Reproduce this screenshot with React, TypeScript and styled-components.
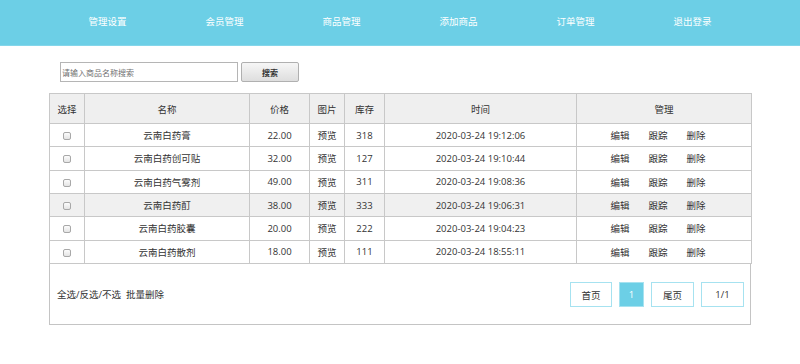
import React from "react";
import styled, { createGlobalStyle } from "styled-components";

const GlobalStyle = createGlobalStyle`
  html, body { margin: 0; padding: 0; background: #fff; }
  body {
    font-family: "Open Sans", "Noto Sans CJK SC", sans-serif;
    color: #333;
  }
  * { box-sizing: border-box; }
`;

const Header = styled.header`
  height: 46px;
  background: #6ccfe6;
  border-bottom: 1px solid #84d6ea;
`;

const Nav = styled.nav`
  width: 702px;
  margin: 0 auto;
  display: flex;
  height: 45px;
  align-items: center;
`;

const NavItem = styled.a`
  flex: 1;
  text-align: center;
  color: #fff;
  font-size: 9.5px;
  text-decoration: none;
  line-height: 1;
  padding-bottom: 2px;
`;

const Main = styled.main`
  width: 702px;
  margin: 0 auto;
`;

const SearchBar = styled.div`
  display: flex;
  align-items: flex-start;
  gap: 3px;
  padding: 16px 0 0 11px;
  height: 47px;
`;

const SearchInput = styled.input`
  width: 178px;
  height: 20px;
  border: 1px solid #b5b5b5;
  padding: 0 1px;
  font-family: "Noto Sans CJK SC", sans-serif;
  font-size: 8px;
  color: #333;
  outline: none;
  &::placeholder { color: #707070; }
`;

const SearchButton = styled.button`
  width: 58px;
  height: 20px;
  border: 1px solid #b0b0b0;
  border-radius: 2px;
  background: linear-gradient(#f6f6f6, #dedede);
  font-family: "Noto Sans CJK SC", sans-serif;
  font-size: 8px;
  font-weight: 700;
  color: #333;
  padding: 0;
`;

const Table = styled.table`
  width: 702px;
  border-collapse: collapse;
  table-layout: fixed;
  border: 1px solid #c4c4c4;
`;

const HeadCell = styled.th`
  height: 30px;
  background: #efefef;
  border: 1px solid #c8c8c8;
  font-weight: 400;
  font-size: 9.5px;
  color: #333;
  text-align: center;
  padding: 0;
`;

const Row = styled.tr<{ $hover?: boolean }>`
  background: ${(p) => (p.$hover ? "#f0f0f0" : "#fff")};
`;

const Cell = styled.td`
  height: 23.33px;
  border: 1px solid #c8c8c8;
  font-size: 9.5px;
  color: #333;
  text-align: center;
  padding: 0;
`;

const Check = styled.span`
  display: inline-block;
  width: 8px;
  height: 8px;
  border: 1px solid #a8a8a8;
  border-radius: 2px;
  background: linear-gradient(#fcfcfc, #e4e4e4);
  vertical-align: middle;
`;

const Actions = styled.div`
  display: flex;
  justify-content: center;
  gap: 19px;
  padding-right: 12px;
`;

const ActionLink = styled.a`
  color: #333;
  text-decoration: none;
`;

const Footer = styled.div`
  height: 61px;
  border: 1px solid #c4c4c4;
  border-top: none;
  display: flex;
  align-items: center;
  justify-content: space-between;
  padding: 0 6px 0 7px;
`;

const BulkText = styled.span`
  font-size: 9.5px;
  color: #333;
`;

const Pager = styled.div`
  display: flex;
  gap: 7px;
  padding-top: 2px;
`;

const PageButton = styled.a<{ $active?: boolean; $w: number }>`
  width: ${(p) => p.$w}px;
  height: 25px;
  display: flex;
  align-items: center;
  justify-content: center;
  border: 1px solid #a6e2f0;
  background: ${(p) => (p.$active ? "#6ccfe6" : "#fff")};
  color: ${(p) => (p.$active ? "#fff" : "#333")};
  font-size: 9.5px;
  text-decoration: none;
`;

const navItems = ["管理设置", "会员管理", "商品管理", "添加商品", "订单管理", "退出登录"];

const rows = [
  { name: "云南白药膏", price: "22.00", stock: "318", time: "2020-03-24 19:12:06" },
  { name: "云南白药创可贴", price: "32.00", stock: "127", time: "2020-03-24 19:10:44" },
  { name: "云南白药气雾剂", price: "49.00", stock: "311", time: "2020-03-24 19:08:36" },
  { name: "云南白药酊", price: "38.00", stock: "333", time: "2020-03-24 19:06:31", hover: true },
  { name: "云南白药胶囊", price: "20.00", stock: "222", time: "2020-03-24 19:04:23" },
  { name: "云南白药散剂", price: "18.00", stock: "111", time: "2020-03-24 18:55:11" },
];

const colWidths = [35, 165, 60, 35, 40, 192, 175];

export default function App() {
  return (
    <>
      <GlobalStyle />
      <Header>
        <Nav>
          {navItems.map((n) => (
            <NavItem key={n}>{n}</NavItem>
          ))}
        </Nav>
      </Header>
      <Main>
        <SearchBar>
          <SearchInput placeholder="请输入商品名称搜索" />
          <SearchButton>搜索</SearchButton>
        </SearchBar>
        <Table>
          <colgroup>
            {colWidths.map((w, i) => (
              <col key={i} style={{ width: w }} />
            ))}
          </colgroup>
          <thead>
            <tr>
              <HeadCell>选择</HeadCell>
              <HeadCell>名称</HeadCell>
              <HeadCell>价格</HeadCell>
              <HeadCell>图片</HeadCell>
              <HeadCell>库存</HeadCell>
              <HeadCell>时间</HeadCell>
              <HeadCell>管理</HeadCell>
            </tr>
          </thead>
          <tbody>
            {rows.map((r) => (
              <Row key={r.name} $hover={r.hover}>
                <Cell>
                  <Check />
                </Cell>
                <Cell>{r.name}</Cell>
                <Cell>{r.price}</Cell>
                <Cell>预览</Cell>
                <Cell>{r.stock}</Cell>
                <Cell>{r.time}</Cell>
                <Cell>
                  <Actions>
                    <ActionLink>编辑</ActionLink>
                    <ActionLink>跟踪</ActionLink>
                    <ActionLink>删除</ActionLink>
                  </Actions>
                </Cell>
              </Row>
            ))}
          </tbody>
        </Table>
        <Footer>
          <BulkText>全选/反选/不选&nbsp;&nbsp;批量删除</BulkText>
          <Pager>
            <PageButton $w={42}>首页</PageButton>
            <PageButton $w={25} $active>
              1
            </PageButton>
            <PageButton $w={43}>尾页</PageButton>
            <PageButton $w={43}>1/1</PageButton>
          </Pager>
        </Footer>
      </Main>
    </>
  );
}
